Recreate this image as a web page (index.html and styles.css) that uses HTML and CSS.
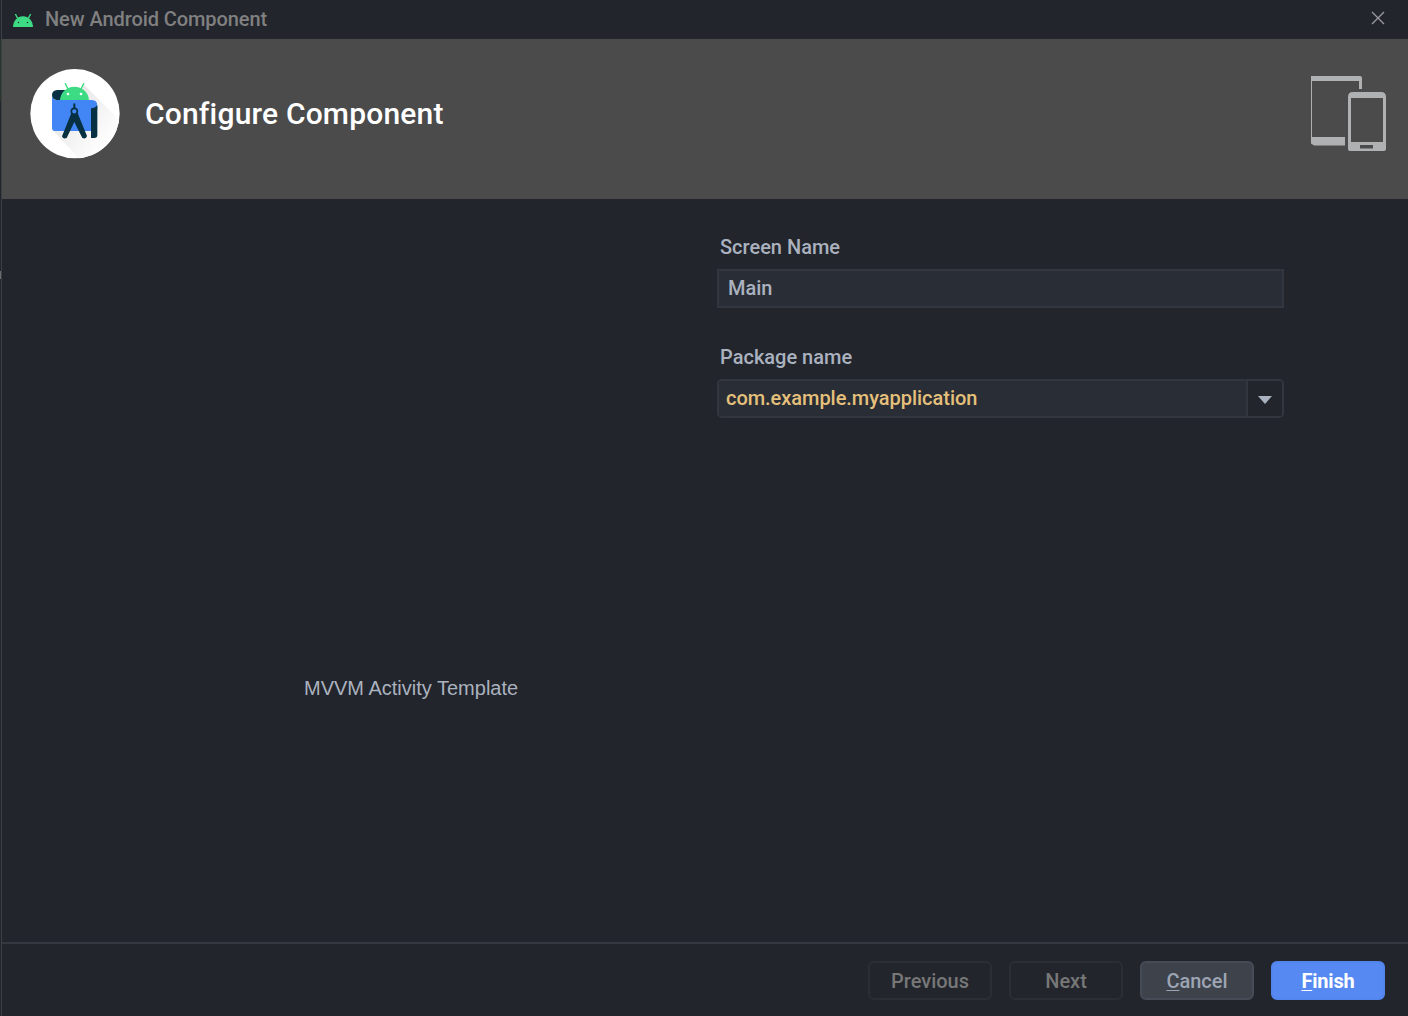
FILE: index.html
```html
<!DOCTYPE html>
<html lang="en">
<head>
<meta charset="utf-8">
<title>New Android Component</title>
<link rel="stylesheet" href="styles.css">
</head>
<body>
<div class="window">
  <header class="titlebar">
    <svg class="android" width="20" height="13" viewBox="0 0 60 39">
      <path d="M7 0l7 13M53 0l-7 13" stroke="#3ddc84" stroke-width="4"/>
      <path d="M0 39C1 20 13 7 30 7s29 13 30 32z" fill="#3ddc84"/>
      <circle cx="16.500" cy="25.500" r="2.200" fill="#22252c"/><circle cx="43.500" cy="25.500" r="2.200" fill="#22252c"/>
    </svg>
    <span class="window-title">New Android Component</span>
    <svg class="close" width="14" height="14" viewBox="0 0 14 14"><path d="M1 1l12 12M13 1L1 13" stroke="#9b9da1" stroke-width="1.300"/></svg>
  </header>
  <section class="banner">
    <svg class="studio" width="90" height="90" viewBox="30 27 270 270">
      <defs>
        <linearGradient id="shade" x1="0" y1="0" x2="1" y2="1"><stop offset="0.1" stop-color="#e2e2e2"/><stop offset="0.75" stop-color="#fff"/></linearGradient>
        <clipPath id="disc"><circle cx="165" cy="161" r="134"/></clipPath>
      </defs>
      <circle cx="165" cy="161" r="134" fill="#fff"/>
      <path clip-path="url(#disc)" d="M191 73L310 192V320H200L98 211z" fill="url(#shade)"/>
      <path d="M112 90h30v30h-32q-14-1-14-15t16-15z" fill="#073042"/>
      <path d="M136 71l9 18M191 71l-9 18" stroke="#3ddc84" stroke-width="4" stroke-linecap="round"/>
      <path d="M120 121C121 96 140 80 163 80s43 16 44 41z" fill="#3ddc84"/>
      <circle cx="144" cy="102" r="4" fill="#fff"/><circle cx="183" cy="102" r="4" fill="#fff"/>
      <path d="M96 107q2 12 14 13h106q16 1 16 17v12h-19v64H105q-9 0-9-9z" fill="#4285f4"/>
      <path d="M213 145q12 0 19-9v89q0 9-9 9h-10z" fill="#073042"/>
      <path d="M163 133v14M157 163L132 230M170 163l25 67" stroke="#073042" stroke-width="6" stroke-linecap="round"/>
      <path d="M154 160h19l28 68q-2 10-14 6l-24-48-23 48q-12 4-14-5z" fill="#073042"/>
      <circle cx="163" cy="154" r="9" fill="#4285f4" stroke="#073042" stroke-width="5"/>
    </svg>
    <h1>Configure Component</h1>
    <svg class="devices" width="75" height="76" viewBox="0 0 75 76">
      <path fill="#afb1b3" fill-rule="evenodd" d="M0 0h49q2 0 2 2v11h-3V5H1v56h33v8.500H3l-3-2zM42 16h28q5 0 5 5v52q0 2-2 2H39q-2 0-2-2V21q0-5 5-5zM40 22v44h32V22zM49 69v3.500h13V69z"/>
    </svg>
  </section>
  <main class="content">
    <div class="preview"><p>MVVM Activity Template</p></div>
    <form class="form">
      <label for="screen">Screen Name</label>
      <input id="screen" class="field" type="text" value="Main">
      <label for="package">Package name</label>
      <div class="combo">
        <input id="package" type="text" value="com.example.myapplication" spellcheck="false">
        <button type="button" class="arrow" aria-label="Show packages"><svg width="14" height="8" viewBox="0 0 14 8"><path d="M0 0h14L7 8z" fill="#abb2bf"/></svg></button>
      </div>
    </form>
  </main>
  <footer class="actions">
    <button class="btn previous" disabled>Previous</button>
    <button class="btn" disabled>Next</button>
    <button class="btn cancel"><u>C</u>ancel</button>
    <button class="btn finish"><u>F</u>inish</button>
  </footer>
</div>
</body>
</html>
```
FILE: styles.css
```css
* { box-sizing: border-box; }
body { margin: 0; font: 500 20px/24px Roboto, sans-serif; color: #abb2bf;
  background: linear-gradient(#22252c 39px, #26382a 39px 101px, #22252c 101px 271px, #6b6d70 271px 279px, #22252c 279px); }
.window { background: #22252c; height: 1016px; margin-left: 1px; border-left: 1px solid #3c3f43; display: flex; flex-direction: column; overflow: hidden; }
.titlebar { height: 39px; display: flex; align-items: center; padding: 0 23px 0 11px; color: #808080; }
.window-title { margin: 0 0 2px 12px; letter-spacing: -.08px; }
.close { margin: 0 0 3px auto; }
.android { margin-top: 2px; }
.banner { height: 160px; background: #4b4b4b; display: flex; align-items: flex-start; padding: 30px 22px 0 28px; }
.studio { display: block; }
h1 { margin: 27px 0 0 25px; font: 500 30px/36px Roboto, sans-serif; letter-spacing: .18px; color: #fff; }
.devices { margin: 7px 0 0 auto; }
.content { flex: 1; display: grid; grid-template-columns: 715px 567px; }
.preview { padding: 477px 0 0 302px; }
.preview p { margin: 0; font: 400 20px/24px "Liberation Sans", sans-serif; }
.form { padding-top: 36px; display: flex; flex-direction: column; }
label { margin: 0 0 10px 3px; }
input { font: inherit; color: inherit; background: #292d35; outline: 0; border: 0; min-width: 0; }
.field { height: 39px; border: 2px solid #32363f; padding: 0 9px 2px; margin-bottom: 37px; }
.combo { height: 39px; border: 2px solid #32363f; border-radius: 5px; display: flex; overflow: hidden; }
.combo input { flex: 1; color: #e5c07b; padding: 0 7px 2px; letter-spacing: -.04px; }
.arrow { width: 36px; border: 0; border-left: 2px solid #32363f; background: #22252c; padding: 3px 0 0; display: flex; align-items: center; justify-content: center; }
.actions { height: 74px; border-top: 2px solid #333841; display: flex; justify-content: flex-end; gap: 17px; padding: 17px 23px 0 0; }
.btn { width: 114px; height: 39px; font: inherit; border: 2px solid #2b2e34; border-radius: 6px; background: none; color: #777; padding: 1px 0 0; }
.previous { width: 124px; }
.cancel { background: #3d424b; border-color: #464c57; color: #9da5b4; }
.finish { background: #568af2; border-color: #5286ec; color: #fff; font-weight: 700; letter-spacing: -.2px; }
u { text-underline-offset: 2px; text-decoration-thickness: 1px; }
```
